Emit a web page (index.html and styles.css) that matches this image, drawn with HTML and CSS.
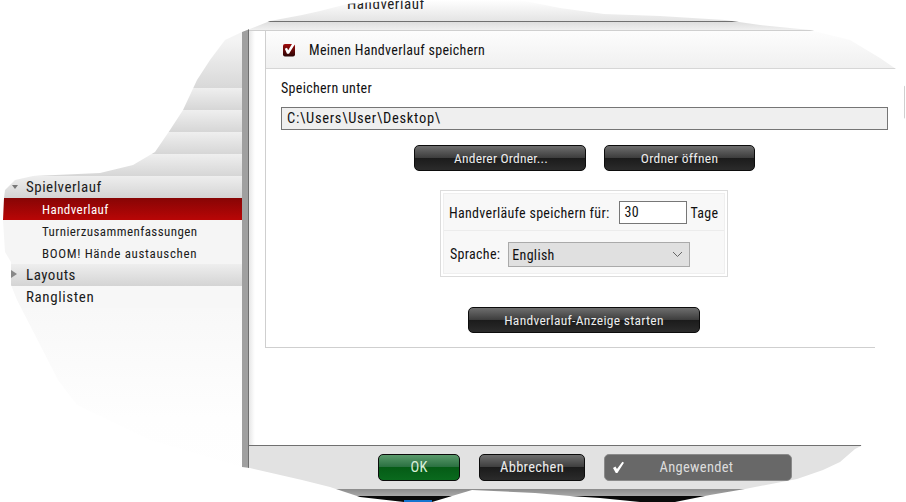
FILE: index.html
```html
<!DOCTYPE html>
<html lang="de">
<head>
<meta charset="utf-8">
<title>Handverlauf</title>
<link rel="stylesheet" href="styles.css">
</head>
<body>
<div class="window">
  <aside class="sidebar">
    <div class="side-top"></div>
    <div class="side-band"></div>
    <div class="side-band"></div>
    <div class="side-band"></div>
    <div class="side-band"></div>
    <div class="side-group"><span class="arrow-down"></span>Spielverlauf</div>
    <div class="side-item active">Handverlauf</div>
    <div class="side-item">Turnierzusammenfassungen</div>
    <div class="side-item boom">BOOM! Hände austauschen</div>
    <div class="side-group"><span class="arrow-right"></span>Layouts</div>
    <div class="side-plain">Ranglisten</div>
    <div class="side-rest"></div>
  </aside>
  <div class="divider"></div>
  <main class="main">
    <div class="titlebar"><span class="title-text">Handverlauf</span></div>
    <div class="subbar"></div>
    <div class="body">
      <section class="panel">
        <header class="panel-head">
          <svg class="check" width="13" height="14" viewBox="0 0 13 14">
            <defs><linearGradient id="cb" x1="0" y1="0" x2="0" y2="1"><stop offset="0" stop-color="#a00c0c"/><stop offset="1" stop-color="#2a0505"/></linearGradient></defs>
            <rect x="0" y="1" width="12" height="12.5" rx="2" fill="url(#cb)"/>
            <path d="M1.8 5.8 L4 4.8 L5.2 7.2 L9.4 0.2 L12 1 L6 10.8 L4 10.8 Z" fill="#fff"/>
          </svg>
          <span>Meinen Handverlauf speichern</span>
        </header>
        <div class="panel-body">
          <div class="label">Speichern unter</div>
          <div class="path">C:\Users\User\Desktop\</div>
          <div class="btn-row">
            <button class="btn w-171">Anderer Ordner...</button>
            <button class="btn w-151">Ordner öffnen</button>
          </div>
          <div class="settings">
            <div class="settings-inner">
              <div class="set-row first">
                <span class="nowrap">Handverläufe speichern für:</span>
                <span class="days">30</span>
                <span>Tage</span>
              </div>
              <div class="set-row second">
                <span>Sprache:</span>
                <div class="select"><span>English</span>
                  <svg width="11" height="7" viewBox="0 0 11 7"><path d="M1 1 L5.5 5.5 L10 1" fill="none" stroke="#666" stroke-width="1"/></svg>
                </div>
              </div>
            </div>
          </div>
          <button class="btn w-232">Handverlauf-Anzeige starten</button>
        </div>
      </section>
    </div>
    <footer class="footer">
      <button class="btn ok">OK</button>
      <button class="btn cancel">Abbrechen</button>
      <button class="btn applied">
        <svg class="tick" width="13" height="13" viewBox="0 0 13 13"><path d="M1 7 L3.4 5.6 L5 8 L10.4 0.8 L12 1.8 L5.4 12 L3.8 12 Z" fill="#fff"/></svg>
        <span>Angewendet</span>
      </button>
    </footer>
    <div class="strip"></div>
    <div class="shadow"><span class="blue"></span></div>
  </main>
</div>
</body>
</html>
```

FILE: styles.css
```css
* { box-sizing: border-box; }
html, body { margin: 0; height: 100%; background: #fff; overflow: hidden; }
body { font-family: "Roboto", sans-serif; font-stretch: 75%; color: #111; }

.window {
  display: flex;
  width: 906px;
  height: 502px;
  overflow: hidden;
  clip-path: polygon(
    242px 32px, 255px 27px, 270px 21px, 302px 15px, 320px 11px, 347px 4px, 390px 1px, 430px 0, 520px 0,
    560px 8px, 604px 14px, 660px 16px, 725px 20px, 760px 25px, 810px 30px, 850px 40px, 880px 58px, 896px 69px,
    903px 85px, 906px 87px, 906px 116px, 900px 125px, 890px 200px, 875px 348px, 868px 405px, 861px 446px,
    855px 449px, 840px 462px, 823px 470px, 797px 479px, 745px 489px, 710px 495px, 675px 502px, 640px 502px,
    600px 498px, 570px 496px, 535px 493px, 472px 490px, 452px 496px, 432px 502px, 404px 502px, 360px 497px,
    330px 487px, 302px 480px, 250px 468px, 242px 467px, 150px 440px, 77px 405px, 58px 380px, 35px 335px,
    17px 300px, 11px 285px, 11px 262px, 5px 252px, 3px 220px, 4px 198px, 5px 190px, 15px 180px, 33px 176px,
    100px 173px, 133px 165px, 155px 152px, 170px 130px, 183px 110px, 197px 80px, 210px 60px, 225px 40px
  );
}

/* Sidebar */
.sidebar { width: 242px; flex: none; display: flex; flex-direction: column; }
.side-top { height: 88px; flex: none; background: linear-gradient(#f4f4f4 40px, #d8d8d8); }
.side-band { height: 22px; flex: none; background: linear-gradient(#efefef, #d6d6d6); }
.side-group {
  height: 22px; flex: none; padding-left: 26px; position: relative;
  background: linear-gradient(#eeeeee, #d4d4d4);
  font-size: 15px; line-height: 22px; letter-spacing: .5px; color: #1c1c1c;
}
.arrow-down {
  position: absolute; left: 12px; top: 9px;
  border-left: 3.5px solid transparent; border-right: 3.5px solid transparent; border-top: 4px solid #777;
}
.arrow-right {
  position: absolute; left: 11px; top: 6px;
  border-top: 4.5px solid transparent; border-bottom: 4.5px solid transparent; border-left: 6px solid #888;
}
.side-item {
  height: 22px; flex: none; padding: 1px 0 0 42px; background: #f5f5f5;
  font-size: 13px; line-height: 22px; letter-spacing: .42px; color: #1c1c1c;
}
.side-item.boom { letter-spacing: .65px; }
.side-item.active { background: linear-gradient(#870505, #b90606); color: #fff; }
.side-plain {
  height: 22px; flex: none; padding-left: 26px; background: #f7f7f7;
  font-size: 15px; line-height: 22px; letter-spacing: .6px; color: #1c1c1c;
}
.side-rest { flex: 1; background: linear-gradient(#f8f8f8, #fefefe 110px, #fff); }

.divider { width: 7px; flex: none; background: #a0a0a0; border-right: 1px solid #6e6e6e; }

/* Main column */
.main { flex: 1; min-width: 0; display: flex; flex-direction: column; }
.titlebar {
  height: 22px; flex: none; border-bottom: 1px solid #707070;
  background: linear-gradient(#ffffff, #e4e4e4);
  padding-left: 98px; overflow: hidden;
  font-size: 15px; line-height: 14px; letter-spacing: .55px; color: #222;
}
.title-text { display: block; margin-top: -3px; }
.subbar { height: 9px; flex: none; background: linear-gradient(#dedede, #f0f0f0); border-bottom: 1px solid #cfcfcf; }
.body {
  flex: none; height: 414px; padding-left: 16px;
  background: linear-gradient(90deg, #e6e6e6, #f8f8f8 4px, #fff 6px);
}
.panel { height: 318px; margin-top: -1px; width: 640px; border: 1px solid #cfcfcf; background: #fff; }
.panel-head {
  height: 38px; display: flex; align-items: center; gap: 13px; padding-left: 17px;
  border-bottom: 1px solid #d6d6d6; background: linear-gradient(#fdfdfd, #f0f0f0);
  font-size: 14px; letter-spacing: .3px;
}
.check { flex: none; margin-top: 1px; }
.panel-body { width: 607px; margin-left: 15px; display: flex; flex-direction: column; align-items: center; }
.label { align-self: flex-start; font-size: 14px; letter-spacing: .3px; line-height: 18px; margin: 10px 0 10px; }
.path {
  width: 607px; height: 23px; background: #efefef; border: 1px solid #757575;
  padding-left: 5px; font-size: 14.5px; line-height: 21px; letter-spacing: .7px;
}
.btn {
  height: 26px; border: 1px solid #0c0c0c; border-radius: 5px; padding: 0;
  font-family: inherit; font-stretch: inherit; font-size: 13.5px; letter-spacing: .3px; color: #ececec;
  background: linear-gradient(#6e6e6e, #3e3e3e 48%, #1b1b1b 50%, #2b2b2b);
}
.btn-row { display: flex; gap: 18px; margin-top: 15px; }
.w-171 { width: 172px; padding-left: 2px; letter-spacing: .2px; }
.w-151 { width: 151px; }
.w-232 { width: 232px; margin: 30px 1px 0 0; }
.settings { width: 288px; height: 87px; margin: 19px 1px 0 0; border: 1px solid #dcdcdc; padding: 2px; background: #fff; }
.settings-inner { height: 81px; border: 1px solid #efefef; background: #f8f8f8; padding-left: 6px; }
.set-row { display: flex; align-items: center; height: 42px; font-size: 14px; letter-spacing: .3px; }
.set-row.first { height: 37px; padding: 1px 0 0 5px; border-bottom: 1px solid #ececec; margin-left: -6px; }
.set-row.second { padding-top: 4px; }
.nowrap { white-space: nowrap; }
.days {
  flex: none; width: 68px; height: 23px; border: 1px solid #777; background: #fff; margin: 0 4px 0 9px;
  padding-left: 5px; line-height: 21px; font-size: 14px;
}
.select {
  flex: none; width: 182px; height: 25px; margin-left: 8px; background: #e0e0e0; border: 1px solid #aaa;
  display: flex; justify-content: space-between; align-items: center; padding: 1px 6px 0 3px;
  font-size: 14px;
}

/* Footer */
.footer {
  height: 44px; flex: none; background: #e2e2e2; border-top: 1px solid #707070;
  display: flex; gap: 19px; padding: 8px 0 0 129px;
}
.footer .btn { height: 27px; font-size: 14.5px; }
.ok { width: 82px; color: #d9f0d9; background: linear-gradient(#5a9a6c, #2a7040 48%, #055c16 50%, #0a6a1e); }
.cancel { width: 106px; }
.footer .applied {
  width: 188px; color: #dcdcdc; border-color: #8a8a8a; background: #686868;
  position: relative; padding-right: 3px;
}
.tick { position: absolute; left: 7px; top: 6px; }
.strip { height: 7px; flex: none; background: linear-gradient(#8c8c8c, #a8a8a8); }
.shadow { flex: 1; background: #0a0a0a; padding-left: 155px; display: flex; align-items: flex-end; }
.blue { display: block; width: 28px; height: 2px; background: #1475d0; }
```
